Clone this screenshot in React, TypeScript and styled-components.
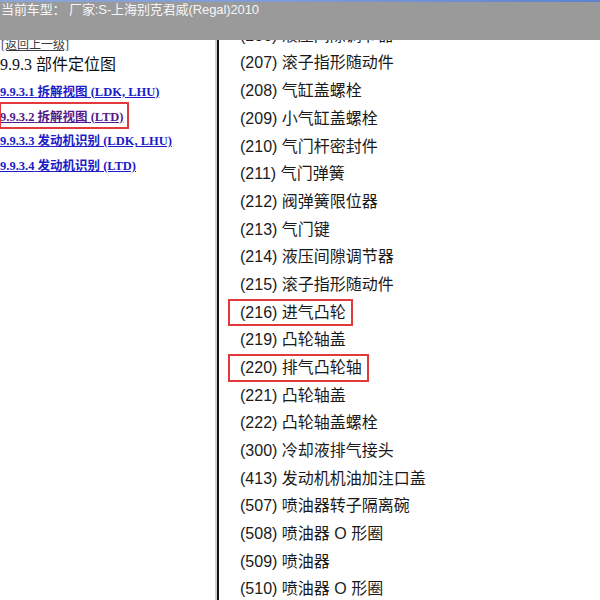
import React from "react";
import styled, { createGlobalStyle } from "styled-components";

const GlobalStyle = createGlobalStyle`
  html, body {
    margin: 0;
    padding: 0;
    background: #ffffff;
  }
  body {
    font-family: "Liberation Sans", "Noto Sans CJK SC", sans-serif;
  }
`;

interface NavLink {
  code: string;
  title: string;
  visited?: boolean;
  marked?: boolean;
}

interface Part {
  no: string;
  name: string;
  marked?: boolean;
}

const navLinks: NavLink[] = [
  { code: "9.9.3.1", title: "拆解视图 (LDK, LHU)" },
  { code: "9.9.3.2", title: "拆解视图 (LTD)", visited: true, marked: true },
  { code: "9.9.3.3", title: "发动机识别 (LDK, LHU)" },
  { code: "9.9.3.4", title: "发动机识别 (LTD)" },
];

const parts: Part[] = [
  { no: "206", name: "液压间隙调节器" },
  { no: "207", name: "滚子指形随动件" },
  { no: "208", name: "气缸盖螺栓" },
  { no: "209", name: "小气缸盖螺栓" },
  { no: "210", name: "气门杆密封件" },
  { no: "211", name: "气门弹簧" },
  { no: "212", name: "阀弹簧限位器" },
  { no: "213", name: "气门键" },
  { no: "214", name: "液压间隙调节器" },
  { no: "215", name: "滚子指形随动件" },
  { no: "216", name: "进气凸轮", marked: true },
  { no: "219", name: "凸轮轴盖" },
  { no: "220", name: "排气凸轮轴", marked: true },
  { no: "221", name: "凸轮轴盖" },
  { no: "222", name: "凸轮轴盖螺栓" },
  { no: "300", name: "冷却液排气接头" },
  { no: "413", name: "发动机机油加注口盖" },
  { no: "507", name: "喷油器转子隔离碗" },
  { no: "508", name: "喷油器 O 形圈" },
  { no: "509", name: "喷油器" },
  { no: "510", name: "喷油器 O 形圈" },
  { no: "511", name: "喷油器支架" },
];

const App = () => {
  return (
    <>
      <GlobalStyle />
      <Page>
        <Header>
          <TitleStrip />
          <VehicleLine>当前车型： 厂家:S-上海别克君威(Regal)2010</VehicleLine>
        </Header>
        <Body>
          <LeftPane>
            <LeftContent>
              <BackLink>[返回上一级]</BackLink>
              <SectionTitle>9.9.3 部件定位图</SectionTitle>
              <LinkList>
                {navLinks.map((link) => (
                  <LinkRow key={link.code}>
                    <DocLink $visited={link.visited} $marked={link.marked}>
                      {link.code} {link.title}
                    </DocLink>
                  </LinkRow>
                ))}
              </LinkList>
            </LeftContent>
          </LeftPane>
          <RightPane>
            <PartList>
              {parts.map((part) => (
                <PartRow key={part.no}>
                  <PartText $marked={part.marked}>
                    ({part.no}) {part.name}
                  </PartText>
                </PartRow>
              ))}
            </PartList>
          </RightPane>
        </Body>
      </Page>
    </>
  );
};

const Page = styled.div`
  width: 600px;
  height: 600px;
  display: flex;
  flex-direction: column;
  overflow: hidden;
  background: #ffffff;
`;

const Header = styled.div`
  flex: none;
  height: 40px;
  background: #9a9a9a;
  position: relative;
  z-index: 1;
`;

const TitleStrip = styled.div`
  height: 2px;
  background: linear-gradient(90deg, #8ea6d6 0%, #7d9ad6 50%, #5f82d0 100%);
`;

const VehicleLine = styled.div`
  height: 16px;
  line-height: 16px;
  font-size: 13px;
  color: #f6f6f6;
  white-space: nowrap;
  padding-left: 1px;
  letter-spacing: -0.1px;
`;

const Body = styled.div`
  flex: 1;
  min-height: 0;
  display: flex;
`;

const LeftPane = styled.div`
  flex: none;
  width: 215px;
  border-right: 2px solid #cfcfcf;
  overflow: hidden;
  font-family: "Liberation Serif", "Noto Sans CJK SC", serif;
`;

const LeftContent = styled.div`
  margin-top: -2px;
`;

const BackLink = styled.div`
  height: 14px;
  line-height: 14px;
  font-size: 12px;
  color: #3a3a3a;
  text-decoration: underline;
  padding-left: 1px;
  white-space: nowrap;
`;

const SectionTitle = styled.div`
  margin-top: 3px;
  height: 20px;
  line-height: 20px;
  font-size: 16px;
  color: #111111;
  white-space: nowrap;
`;

const LinkList = styled.div`
  margin-top: 5px;
`;

const LinkRow = styled.div`
  height: 24.7px;
  display: flex;
  align-items: stretch;
`;

const DocLink = styled.a<{ $visited?: boolean; $marked?: boolean }>`
  position: relative;
  line-height: 24.7px;
  font-size: 12.5px;
  font-weight: bold;
  color: ${({ $visited }) => ($visited ? "#551a8b" : "#1c1cc8")};
  text-decoration: underline;
  white-space: nowrap;
  cursor: pointer;

  &::after {
    content: "";
    display: ${({ $marked }) => ($marked ? "block" : "none")};
    position: absolute;
    left: -1px;
    right: -5px;
    top: -3px;
    bottom: 0;
    border: 2px solid #e23a3c;
  }
`;

const RightPane = styled.div`
  flex: 1;
  min-width: 0;
  border-left: 2px solid #141414;
  overflow: hidden;
  padding-left: 21px;
`;

const PartList = styled.div`
  margin-top: -18.2px;
`;

const PartRow = styled.div`
  height: 27.68px;
  display: flex;
  align-items: stretch;
`;

const PartText = styled.span<{ $marked?: boolean }>`
  position: relative;
  line-height: 27.68px;
  font-size: 16px;
  color: #1a1a1a;
  white-space: nowrap;

  &::after {
    content: "";
    display: ${({ $marked }) => ($marked ? "block" : "none")};
    position: absolute;
    left: -12px;
    right: -7px;
    top: 0;
    bottom: 0;
    border: 2px solid #e23a3c;
  }
`;

export default App;
